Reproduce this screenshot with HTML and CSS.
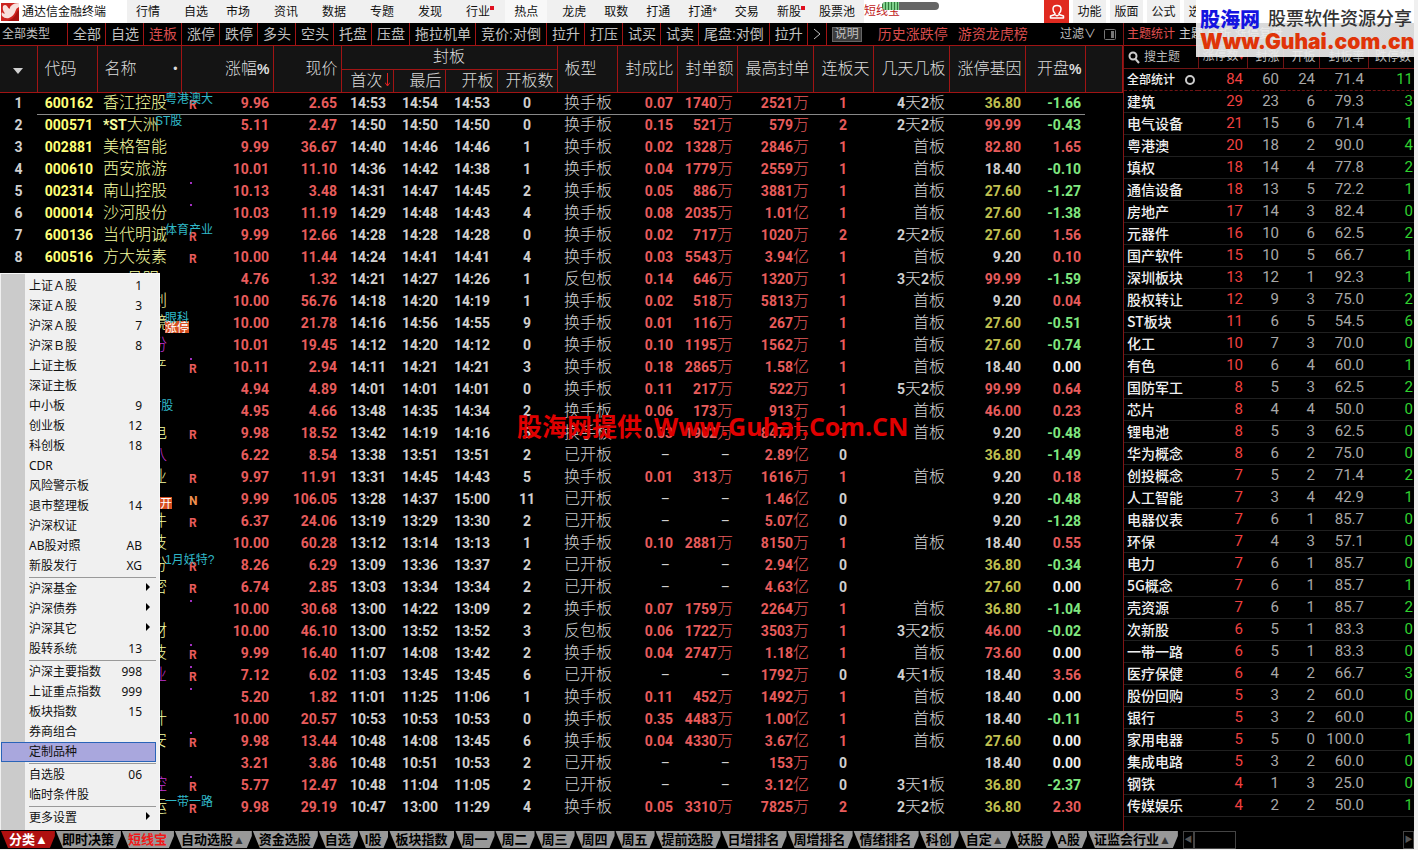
FILE: index.html
```html
<!DOCTYPE html>
<html lang="zh-CN">
<head>
<meta charset="utf-8">
<title>通达信金融终端</title>
<link rel="stylesheet" href="styles.css">
</head>
<body>
<div class="app">
  <header class="topbar">
    <div class="brand">
      <svg class="brand-icon" width="18" height="18" viewBox="0 0 18 18" aria-hidden="true"><rect width="18" height="18" fill="#cc2420"/><path d="M11 2Q13 0 18 0V4Q15 5 14.500 8Q13 13 8 15Q4 16 1 13Q0 11 1 9Q2 11 4 10.500Q1 7 2 3Q4 1 6 3Q7 5 8.500 6Q9 3 11 2Z" fill="#f8e0dc"/><path d="M18 7V18H6Q13 16 15 11Q16 8 18 7Z" fill="#a81210"/></svg>
      <span>通达信金融终端</span>
    </div>
    <nav class="menu" aria-label="主菜单">
      <button>行情</button><button class="wide">自选</button><button>市场</button><button class="wide">资讯</button><button class="wide">数据</button><button class="wide">专题</button><button class="wide">发现</button><button class="wide dot">行业</button><button class="wide on">热点</button><button class="wide">龙虎</button><button>取数</button><button>打通</button><button>打通*</button><button>交易</button><button class="dot">新股</button><button>股票池</button>
    </nav>
    <div class="ticker">短线宝<span class="meter"><i></i></span></div>
    <div class="tools">
      <button class="user" aria-label="用户"><svg width="16" height="16" viewBox="0 0 16 16" fill="none" stroke="#fff" stroke-width="1.500" stroke-linejoin="round"><path d="M6 9.500Q4 8 4 5Q4 1.500 8 1.500Q12 1.500 12 5Q12 8 10 9.500V10.500L14.500 12V14H1.500V12L6 10.500Z"/><path d="M6.500 11Q8 12.500 9.500 11"/></svg></button>
      <button>功能</button><button>版面</button><button>公式</button><button>选项</button>
    </div>
  </header>

  <main class="body">
    <section class="quotes">
      <div class="filters">
        <button class="type">全部类型</button>
        <button>全部</button><button>自选</button><button class="hot">连板</button><button>涨停</button><button>跌停</button><button>多头</button><button>空头</button><button>托盘</button><button>压盘</button><button>拖拉机单</button><button class="pair">竞价:对倒</button><button>拉升</button><button>打压</button><button>试买</button><button>试卖</button><button class="pair">尾盘:对倒</button><button>拉升</button>
        <button class="more" aria-label="更多"><svg width="8" height="12" viewBox="0 0 8 12"><path d="M1 1L7 6L1 11" fill="none" stroke="#c0c0c0"/></svg></button>
        <button class="explain">说明</button>
        <a class="link" href="#">历史涨跌停</a><a class="link" href="#">游资龙虎榜</a>
        <button class="filter">过滤∨</button>
        <button class="pane" aria-label="侧栏"><svg width="12" height="11" viewBox="0 0 12 11"><rect x=".5" y=".5" width="11" height="10" rx="1" fill="none" stroke="#777"/><rect x="7" y="2" width="3" height="7" fill="#777"/></svg></button>
      </div>
      <table class="grid">
        <colgroup><col class="w37"><col class="w60"><col class="w84"><col class="w92"><col class="w68"><col class="w52"><col class="w52"><col class="w52"><col class="w60"><col class="w60"><col class="w60"><col class="w60"><col class="w76"><col class="w60"><col class="w76"><col class="w76"><col class="w60"><col></colgroup>
        <thead>
          <tr>
            <th rowspan="2" class="mid"><svg width="10" height="6" viewBox="0 0 10 6"><path d="M0 0H10L5 6Z" fill="#d0d0d0"/></svg></th>
            <th rowspan="2" class="left">代码</th>
            <th rowspan="2" class="left nm">名称</th>
            <th rowspan="2">涨幅<b>%</b></th>
            <th rowspan="2">现价</th>
            <th colspan="4" class="mid">封板</th>
            <th rowspan="2" class="left">板型</th>
            <th rowspan="2">封成比</th>
            <th rowspan="2">封单额</th>
            <th rowspan="2">最高封单</th>
            <th rowspan="2">连板天</th>
            <th rowspan="2">几天几板</th>
            <th rowspan="2">涨停基因</th>
            <th rowspan="2">开盘<b>%</b></th>
            <th rowspan="2"></th>
          </tr>
          <tr>
            <th class="sort">首次<svg width="5" height="14" viewBox="0 0 5 14"><path d="M2.500 0V13M0 9.500L2.500 13L5 9.500" fill="none" stroke="#e02020"/></svg></th>
            <th>最后</th><th>开板</th><th>开板数</th>
          </tr>
        </thead>
        <tbody id="quotes"></tbody>
      </table>
      <div class="watermark"><span>股海网提供</span><span>Www.Guhai.Com.CN</span></div>
      <div class="popup" role="menu" id="popup"></div>
    </section>

    <aside class="themes">
      <div class="theme-tabs"><button class="on">主题统计</button><button>主题</button><button>分析</button><button>涨停复盘</button></div>
      <table class="stats">
        <colgroup><col><col class="w49"><col class="w36"><col class="w36"><col class="w49"><col class="w46"></colgroup>
        <thead><tr>
          <th class="search"><svg width="12" height="13" viewBox="0 0 12 13"><circle cx="5" cy="5" r="3.500" fill="none" stroke="#ccc" stroke-width="2"/><path d="M7.500 8L11 12" stroke="#ccc" stroke-width="2"/></svg>搜主题</th>
          <th>涨停数<em>▾</em></th><th>封涨</th><th>开板</th><th>封板率</th><th>跌停数</th>
        </tr></thead>
        <tbody id="stats"></tbody>
      </table>
      <div class="logo">
        <div class="logo-top"><b>股海网</b><span>股票软件资源分享</span></div>
        <div class="logo-url">Www.Guhai.com.cn</div>
      </div>
    </aside>
  </main>

  <footer class="tabs">
    <button class="cat">分类▲</button><button>即时决策</button><button class="on">短线宝</button><button>自动选股<i>▲</i></button><button>资金选股</button><button>自选</button><button>I股</button><button>板块指数</button><button>周一</button><button>周二</button><button>周三</button><button>周四</button><button>周五</button><button>提前选股</button><button>日增排名</button><button>周增排名</button><button>情绪排名</button><button>科创</button><button>自定<i>▲</i></button><button>妖股</button><button>A股</button><button>证监会行业<i>▲</i></button>
    <div class="scroll"><button aria-label="向左">◀</button><span></span><button class="end" aria-label="向右">▶</button></div>
  </footer>
</div>
<script src="script.js"></script>
</body>
</html>
```
FILE: styles.css
```css
* { box-sizing: border-box; }
body {
  margin: 0;
  background: #f0f0f0;
  color: #d0d0d0;
  font: 12px/16px "Liberation Sans", "Noto Sans CJK SC", sans-serif;
}
button { font: inherit; color: inherit; background: none; border: 0; padding: 0; margin: 0; white-space: nowrap; }
a { color: inherit; text-decoration: none; }
table { border-collapse: collapse; table-layout: fixed; width: 100%; }
th, td { padding: 0; font-weight: 400; white-space: nowrap; }
.app { min-height: 100vh; padding-right: 4px; display: flex; flex-direction: column; }

/* top bar */
.topbar { display: flex; height: 23px; background: #fff; color: #111; }
.brand { display: flex; align-items: center; gap: 3px; width: 127px; padding-left: 1px; }
.menu { display: flex; background: #f0f0f0; }
.menu button { padding: 0 9px; position: relative; }
.menu .wide { margin-left: 6px; }
.menu .on { background: #f8f8f8; }
.menu .dot::after { content: ""; position: absolute; top: 6px; right: 5px; width: 4px; height: 4px; background: #e01020; }
.ticker { position: relative; color: #c02020; line-height: 23px; }
.meter { position: absolute; left: 18px; top: 2px; width: 57px; height: 8px; border-radius: 4px; background: #666; overflow: hidden; }
.meter i { display: block; width: 17px; height: 8px; background: repeating-linear-gradient(90deg, #2f7a3c 0 1px, #7ed08a 1px 3px); }
.tools { display: flex; gap: 4px; width: 370px; margin-left: auto; }
.tools button { width: 33px; background: #f0f0f0; }
.tools .user { width: 25px; background: #e02a20; display: grid; place-items: center; }

.body { display: flex; flex: 1; background: #000; }
.quotes { flex: 1; min-width: 0; position: relative; }

/* filter strip */
.filters { display: flex; height: 23px; border-bottom: 1px solid #a01414; font-size: 14px; align-items: stretch; color: #c0c0c0; }
.filters > button { border-right: 1px solid #a01414; padding: 0 4px 0 5px; }
.filters .type { width: 68px; padding: 0 2px; font-size: 12px; text-align: left; }
.filters .pair { padding: 0 5px; }
.filters .hot, .filters .link { color: #d84c4c; }
.filters .more { width: 19px; padding: 0; display: grid; place-items: center; }
.filters .explain { align-self: center; margin-left: 5px; height: 15px; padding: 0 2px; border: 1px solid #666; background: #3c3c3c; font-size: 12px; line-height: 12px; }
.filters .link { margin-left: 16px; line-height: 22px; }
.filters .link + .link { margin-left: 10px; }
.filters .filter { margin-left: auto; border: 0; font-size: 12px; padding: 0 8px 0 0; }
.filters .pane { border: 0; padding: 0 7px 0 0; display: grid; place-items: center; }

/* quote table */
.w36 { width: 36px; } .w37 { width: 37px; } .w46 { width: 46px; } .w49 { width: 49px; } .w52 { width: 52px; }
.w60 { width: 60px; } .w68 { width: 68px; } .w76 { width: 76px; } .w84 { width: 84px; } .w92 { width: 92px; }
.grid th {
  height: 23px; background: #141414; border: 1px solid #a01414; border-top: 0;
  padding-right: 3px; text-align: right; font-size: 16px; line-height: 20px; font-weight: 300; color: #dcdcdc;
}
.grid th b { font-size: 14px; font-weight: 700; }
.grid th:first-child { border-left: 0; }
.grid tr:nth-child(2) th:first-child { border-left: 1px solid #a01414; }
.grid .left { text-align: left; padding-left: 7px; }
.grid .mid { text-align: center; padding: 0; }
.grid .nm::after { content: "•"; float: right; font-size: 12px; }
.grid .sort svg { margin-left: 2px; vertical-align: -1px; }
.grid td { height: 22px; padding-right: 4px; text-align: right; font: 700 14px/20px Roboto, "Noto Sans CJK SC", sans-serif; color: #d0d0d0; }
.grid td.time { padding-right: 7px; }
.grid td .zh { font-size: 16px; font-weight: 300; line-height: 16px; }
.grid td.dash { font-weight: 400; padding-right: 7px; }
.grid td.name { position: relative; padding: 0 0 0 6px; text-align: left; }
.grid tbody tr:first-child td { border-bottom: 1px solid #888; }
.grid tbody tr:first-child td:first-child, .grid tbody tr td:last-child { border-bottom: 0; }
.grid .red { color: #e85c5c; }
.grid .green { color: #80e880; }
.grid .olive { color: #c0c050; }
.grid .yellow { color: #ffff78; }
.grid .pale { color: #f8ffa0; }
.grid .purple { color: #c030d0; }
.grid .white { color: #f0f0f0; }
.tag { position: absolute; z-index: 1; left: 100%; margin-left: -16px; top: -2px; color: #30b8c8; font: 12px/16px "Liberation Sans", "Noto Sans CJK SC", sans-serif; }
.tag.near { margin-left: -26px; }
.tag.inner { margin-left: -35px; }
.badge { position: absolute; left: 100%; margin-left: -16px; top: 9px; background: #d85020; color: #fff; font: 12px/12px "Noto Sans CJK SC", sans-serif; }
.badge.near { margin-left: -21px; }
.mark { float: left; padding-left: 8px; font-size: 12px; line-height: 24px; height: 20px; position: relative; color: #e85c5c; }
.mark.n { color: #f09050; }
.pip::before { content: ""; position: absolute; left: 9px; top: 1px; width: 2px; height: 2px; background: #a030c0; }

.watermark { position: absolute; z-index: 2; left: 517px; top: 386px; display: flex; gap: 12px; color: #e00000; font: 700 25px/34px "Open Sans", "Noto Sans CJK SC", sans-serif; white-space: nowrap; }

/* category popup */
.popup { position: absolute; z-index: 3; left: 0; bottom: 1px; width: 160px; padding: 2px 3px 2px 1px; color: #111; border: 1px solid #f8f8f8; border-width: 1px 1px 0 0; background: linear-gradient(90deg, #f0f0f0 1px, #cbcbcb 1px 25px, #f0f0f0 25px); font-family: "Noto Sans", "Noto Sans CJK SC", sans-serif; }
.popup button { display: flex; justify-content: space-between; width: 100%; height: 20px; line-height: 20px; padding: 0 14px 0 28px; }
.popup .sub { padding-right: 6px; }
.popup .sub::after { content: ""; align-self: center; margin-bottom: 4px; border: 4px solid transparent; border-left-color: #000; border-right: 0; }
.popup .sel { background: #a9a7dd; outline: 1px solid #2a64b8; outline-offset: -1px; }
.popup hr { margin: 1px 0 1px 28px; border: 0; height: 1px; background: #999; }

/* theme statistics */
.themes { position: relative; width: 291px; border-left: 1px solid #801414; }
.theme-tabs { display: flex; gap: 4px; height: 23px; padding-left: 3px; border-bottom: 1px solid #a01414; }
.theme-tabs .on { color: #e05050; }
.stats th { height: 22px; border: 1px solid #701414; border-width: 0 1px 1px 0; text-align: right; padding-right: 3px; color: #bbb; }
.stats th em { color: #e03030; font-style: normal; font-size: 9px; }
.stats .search { text-align: left; padding-left: 4px; }
.stats th:last-child { border-right: 0; }
.search svg { margin-right: 4px; vertical-align: -3px; }
.stats td { height: 22px; border-bottom: 1px solid #202020; text-align: right; padding-right: 4px; color: #a8a8a8; font: 15px/20px Roboto, sans-serif; }
.stats td:first-child { text-align: left; padding: 0 0 0 3px; color: #f0f0f0; font: 500 14px/20px "Noto Sans CJK SC", sans-serif; }
.stats td:nth-child(2) { color: #f04040; }
.stats td:last-child { color: #30d030; padding-right: 1px; }
.stats tbody tr:first-child td { border-bottom: 1px dashed #701414; }
.stats tbody tr:first-child td:first-child { font-size: 12px; }
.ring { display: inline-block; width: 10px; height: 10px; margin-left: 10px; border: 2px solid #ccc; border-radius: 50%; vertical-align: -1px; }
.logo { position: absolute; right: 0; top: -23px; width: 218px; height: 57px; padding: 7px 0 0 4px; background: linear-gradient(#ffffff 0 23px, rgba(236, 236, 236, .92) 23px); white-space: nowrap; }
.logo-top { display: flex; gap: 8px; align-items: center; height: 24px; }
.logo-top b { color: #1414e0; font: 900 20px/24px "Noto Sans CJK SC", sans-serif; }
.logo-top span { color: #333; font-size: 18px; font-weight: 500; }
.logo-url { color: #e03408; font: 900 21px/22px Inter, sans-serif; }

/* bottom tabs */
.tabs { display: flex; height: 18px; margin-bottom: 1px; background: #000; color: #000; font-size: 13px; font-weight: 700; }
.tabs > button { height: 17px; padding: 0 7px; background: #989898; line-height: 17px; clip-path: polygon(1px 0, 100% 0, 100% 30%, calc(100% - 5px) 100%, 8px 100%); }
.tabs > .cat { color: #fff; background: #b01010; padding: 0 7px 0 9px; }
.tabs > .on { color: #f01818; }
.tabs i { font-style: normal; font-size: 12px; color: #333; }
.scroll { flex: 1; display: flex; margin-left: 5px; color: #555; font-size: 8px; }
.scroll button { width: 11px; border: 1px solid #444; line-height: 14px; }
.scroll span { width: 42px; border: 1px solid #444; }
.scroll .end { margin-left: auto; }
```
FILE: script.js
```js
// code|name|name colour|change|price|first|last|open|count|type|ratio|seal|max|days|boards|gene|opening|mark|pip|tag|badge
const rows = `
600162|香江控股|pale|9.96|2.65|14:53|14:54|14:53|0|换手板|0.07|1740万|2521万|1|4天2板|36.80|-1.66|R||粤港澳大
000571|*ST大洲|pale|5.11|2.47|14:50|14:50|14:50|0|换手板|0.15|521万|579万|2|2天2板|99.99|-0.43|||<ST股
002881|美格智能|pale|9.99|36.67|14:40|14:46|14:46|1|换手板|0.02|1328万|2846万|1|首板|82.80|1.65
000610|西安旅游|pale|10.01|11.10|14:36|14:42|14:38|1|换手板|0.04|1779万|2559万|1|首板|18.40|-0.10
002314|南山控股|pale|10.13|3.48|14:31|14:47|14:45|2|换手板|0.05|886万|3881万|1|首板|27.60|-1.27||p
000014|沙河股份|pale|10.03|11.19|14:29|14:48|14:43|4|换手板|0.08|2035万|1.01亿|1|首板|27.60|-1.38||p
600136|当代明诚|pale|9.99|12.66|14:28|14:28|14:28|0|换手板|0.02|717万|1020万|2|2天2板|27.60|1.56|R||体育产业
600516|方大炭素|pale|10.00|11.44|14:24|14:41|14:41|4|换手板|0.03|5543万|3.94亿|1|首板|9.20|0.10|R
600275|*ST昌明|pale|4.76|1.32|14:21|14:27|14:26|1|反包板|0.14|646万|1320万|1|3天2板|99.99|-1.59
300059|东方科创|pale|10.00|56.76|14:18|14:20|14:19|1|换手板|0.02|518万|5813万|1|首板|9.20|0.04
300622|博士眼镜|pale|10.00|21.78|14:16|14:56|14:55|9|换手板|0.01|116万|267万|1|首板|27.60|-0.51|||眼科|涨停
002001|精工股份|purple|10.01|19.45|14:12|14:20|14:12|0|换手板|0.10|1195万|1562万|1|首板|27.60|-0.74
600325|华发地产|pale|10.11|2.94|14:11|14:21|14:21|3|换手板|0.18|2865万|1.58亿|1|首板|18.40|0.00|R|p
600289|*ST信|pale|4.94|4.89|14:01|14:01|14:01|0|换手板|0.11|217万|522万|1|5天2板|99.99|0.64
600265|ST景|pale|4.95|4.66|13:48|14:35|14:34|2|换手板|0.06|173万|913万|1|首板|46.00|0.23|||{ST股
600131|岷江水电|pale|9.98|18.52|13:42|14:19|14:16|5|换手板|0.03|1902万|8477万|1|首板|9.20|-0.48|R
002027|分众三八|purple|6.22|8.54|13:38|13:51|13:51|2|已开板|–|–|2.89亿|0||36.80|-1.49
600110|诺德实业|pale|9.97|11.91|13:31|14:45|14:43|5|换手板|0.01|313万|1616万|1|首板|9.20|0.18|R
603068|博通集|pale|9.99|106.05|13:28|14:37|15:00|11|已开板|–|–|1.46亿|0||9.20|-0.48|N|||<开
300036|超图软件|pale|6.37|24.06|13:19|13:29|13:30|2|已开板|–|–|5.07亿|0||9.20|-1.28|R
002405|中科科技|pale|10.00|60.28|13:12|13:14|13:13|1|换手板|0.10|2881万|8150万|1|首板|18.40|0.55
000012|南玻股份|pale|8.26|6.29|13:09|13:36|13:37|2|已开板|–|–|2.94亿|0||36.80|-0.34|R||1月妖特?
000837|秦川精密|pale|6.74|2.85|13:03|13:34|13:34|2|已开板|–|–|4.63亿|0||27.60|0.00|R
300001|特锐德|pale|10.00|30.68|13:00|14:22|13:09|2|换手板|0.07|1759万|2264万|1|首板|36.80|-1.04||p
300395|菲利新材|pale|10.00|46.10|13:00|13:52|13:52|3|反包板|0.06|1722万|3503万|1|3天2板|46.00|-0.02
002156|通富科技|pale|9.99|16.40|11:07|14:08|13:42|2|换手板|0.04|2747万|1.18亿|1|首板|73.60|0.00|R|p
600884|杉杉实业|purple|7.12|6.02|11:03|13:45|13:45|6|已开板|–|–|1792万|0|4天1板|18.40|3.56|R|p
600010|包钢|pale|5.20|1.82|11:01|11:25|11:06|1|换手板|0.11|452万|1492万|1|首板|18.40|0.00||p
300188|美亚设计|pale|10.00|20.57|10:53|10:53|10:53|0|换手板|0.35|4483万|1.00亿|1|首板|18.40|-0.11
002212|南洋天安|pale|9.98|13.44|10:48|14:08|13:45|6|换手板|0.04|4330万|3.67亿|1|首板|27.60|0.00|R|p
000100|三安|pale|3.21|3.86|10:48|10:51|10:53|2|已开板|–|–|153万|0||18.40|0.00
600503|华丽家控|purple|5.77|12.47|10:48|11:04|11:05|2|已开板|–|–|3.12亿|0|3天1板|36.80|-2.37|R|p
603128|华贸海运|pale|9.98|29.19|10:47|13:00|11:29|4|换手板|0.05|3310万|7825万|2|2天2板|36.80|2.30|R||一带一路`.trim().split("\n").map(r => r.split("|"));

const zh = s => s.replace(/[\u4e00-\u9fff]+/g, '<span class="zh">$&</span>');
const td = (s, c = "") => `<td class="${c}">${zh(s)}</td>`;

document.getElementById("quotes").innerHTML = rows.map((r, i) => {
  const [code, name, tone, chg, price, t1, t2, t3, n, type, ratio, seal, max, days, boards, gene, open, mark = "", pip = "", tag = "", badge = ""] = r;
  const g = +gene >= 40 ? "red" : +gene >= 20 ? "olive" : "";
  const o = +open > 0 ? "red" : +open < 0 ? "green" : "white";
  const m = mark || pip ? `<span class="mark${mark === "N" ? " n" : ""}${pip ? " pip" : ""}">${mark}</span>` : "";
  const shift = { "<": " near", "{": " inner" };
  const label = (s, c) => s ? `<span class="${c}${shift[s[0]] || ""}">${s.replace(/[<{]/g, "")}</span>` : "";
  const dash = ratio === "–" ? "dash" : "red";
  return "<tr>" + td(String(i + 1), "mid") + td(code, "yellow") +
    `<td class="name ${tone}">${zh(name)}${label(tag, "tag")}${label(badge, "badge")}</td>` +
    `<td class="red">${m}${chg}</td>` + td(price, "red") + td(t1, "time") + td(t2, "time") + td(t3, "time") +
    td(n, "mid") + td(type, "left") + td(ratio, dash) + td(seal, dash) + td(max, "red") +
    td(days, days === "0" ? "mid" : "mid red") + td(boards) + td(gene, g) + td(open, o) + "<td></td></tr>";
}).join("");

const stats = `全部统计 84 60 24 71.4 11,建筑 29 23 6 79.3 3,电气设备 21 15 6 71.4 1,粤港澳 20 18 2 90.0 4,填权 18 14 4 77.8 2,通信设备 18 13 5 72.2 1,房地产 17 14 3 82.4 0,元器件 16 10 6 62.5 2,国产软件 15 10 5 66.7 1,深圳板块 13 12 1 92.3 1,股权转让 12 9 3 75.0 2,ST板块 11 6 5 54.5 6,化工 10 7 3 70.0 0,有色 10 6 4 60.0 1,国防军工 8 5 3 62.5 2,芯片 8 4 4 50.0 0,锂电池 8 5 3 62.5 0,华为概念 8 6 2 75.0 0,创投概念 7 5 2 71.4 2,人工智能 7 3 4 42.9 1,电器仪表 7 6 1 85.7 0,环保 7 4 3 57.1 0,电力 7 6 1 85.7 0,5G概念 7 6 1 85.7 1,壳资源 7 6 1 85.7 2,次新股 6 5 1 83.3 0,一带一路 6 5 1 83.3 0,医疗保健 6 4 2 66.7 3,股份回购 5 3 2 60.0 0,银行 5 3 2 60.0 0,家用电器 5 5 0 100.0 1,集成电路 5 3 2 60.0 0,钢铁 4 1 3 25.0 0,传媒娱乐 4 2 2 50.0 1`;
document.getElementById("stats").innerHTML = stats.split(",").map((s, i) =>
  "<tr>" + s.split(" ").map((v, j) => `<td>${v}${i + j ? "" : '<span class="ring"></span>'}</td>`).join("") + "</tr>").join("");

const menu = "上证Ａ股:1,深证Ａ股:3,沪深Ａ股:7,沪深Ｂ股:8,上证主板,深证主板,中小板:9,创业板:12,科创板:18,CDR,风险警示板,退市整理板:14,沪深权证,AB股对照:AB,新股发行:XG,-,沪深基金:>,沪深债券:>,沪深其它:>,股转系统:13,-,沪深主要指数:998,上证重点指数:999,板块指数:15,券商组合,定制品种:*,-,自选股:06,临时条件股,-,更多设置:>";
document.getElementById("popup").innerHTML = menu.split(",").map(s => {
  if (s === "-") return "<hr>";
  const [t, k = ""] = s.split(":");
  const c = k === ">" ? "sub" : k === "*" ? "sel" : "";
  return `<button role="menuitem" class="${c}"><span>${t}</span>${c ? "" : `<span>${k}</span>`}</button>`;
}).join("");
```
